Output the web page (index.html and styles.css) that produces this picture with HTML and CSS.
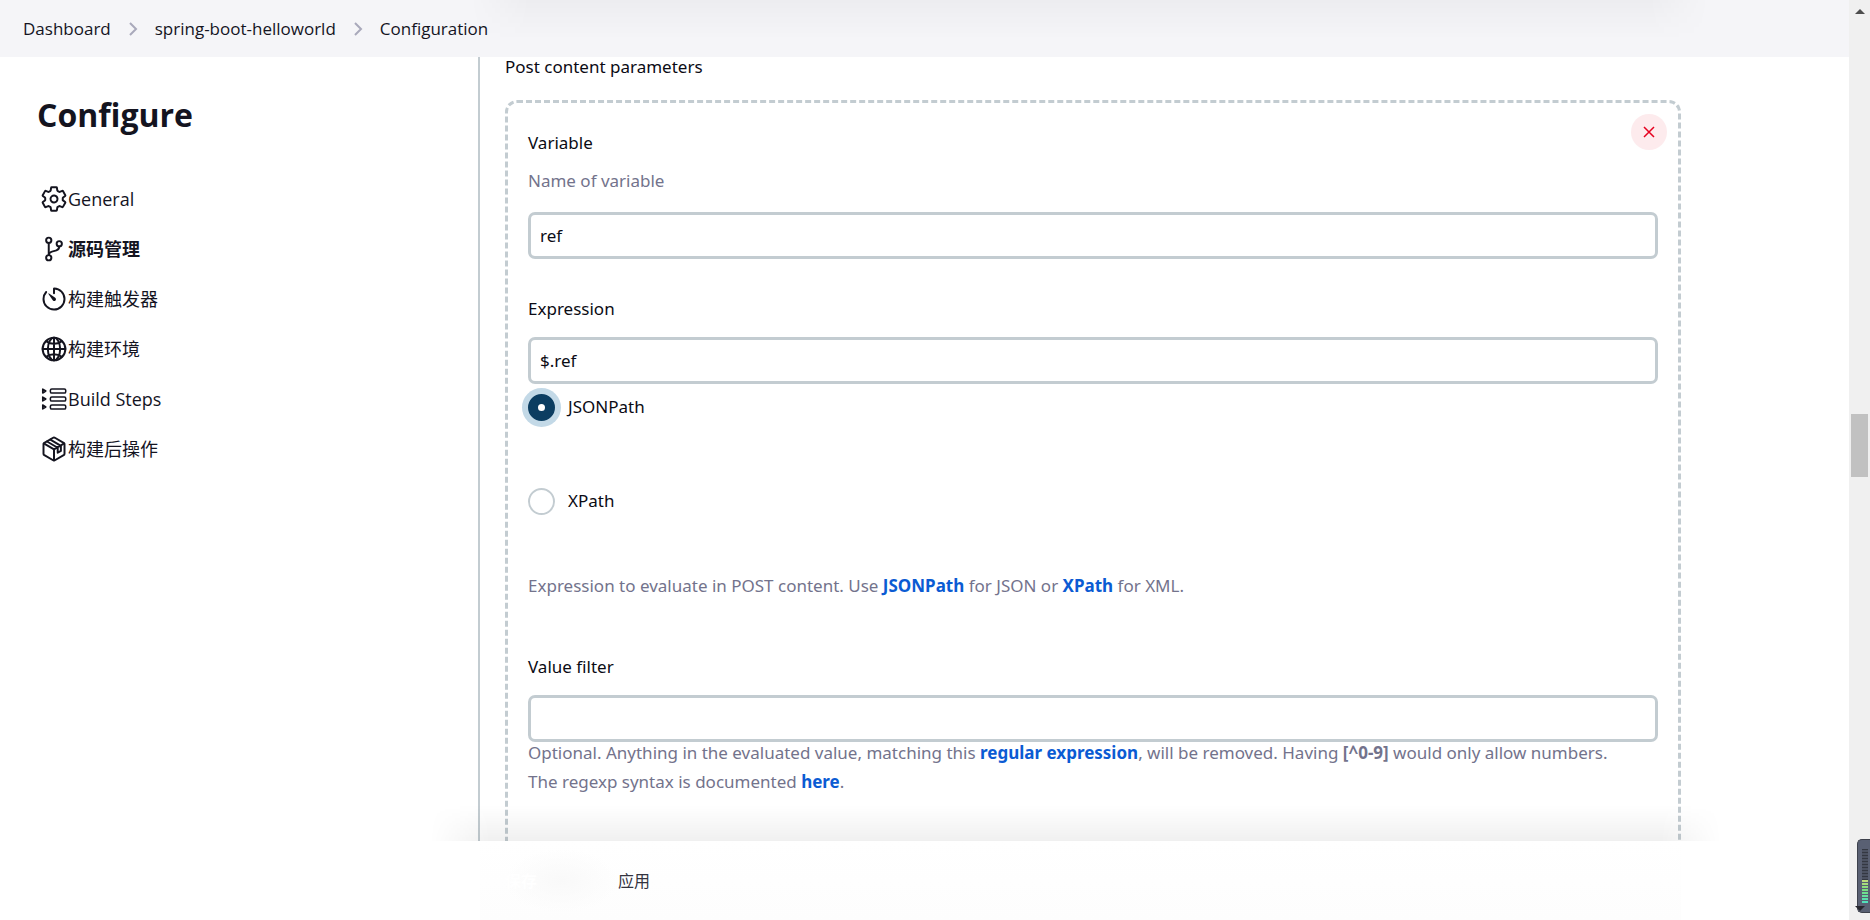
FILE: index.html
```html
<!DOCTYPE html>
<html lang="zh-CN">
<head>
<meta charset="utf-8">
<title>spring-boot-helloworld Config</title>
<link rel="stylesheet" href="styles.css">
</head>
<body>
<div class="app">
  <header class="topbar">
    <nav class="breadcrumbs" aria-label="Breadcrumb">
      <a href="#">Dashboard</a>
      <svg class="chevron" viewBox="0 0 10 14" aria-hidden="true"><path d="M2 1l6 6-6 6"/></svg>
      <a href="#">spring-boot-helloworld</a>
      <svg class="chevron" viewBox="0 0 10 14" aria-hidden="true"><path d="M2 1l6 6-6 6"/></svg>
      <a href="#">Configuration</a>
    </nav>
  </header>

  <div class="workspace">
    <aside class="sidebar">
      <h1 class="title">Configure</h1>
      <nav class="tasks" aria-label="Configure">
        <a class="task" href="#">
          <svg class="icon" viewBox="0 0 512 512" aria-hidden="true"><path d="M262.29 192.31a64 64 0 1057.4 57.4 64.13 64.13 0 00-57.4-57.4zM416.39 256a154.34 154.34 0 01-1.53 20.79l45.21 35.46a10.81 10.81 0 012.45 13.75l-42.77 74a10.81 10.81 0 01-13.14 4.59l-44.9-18.08a16.11 16.11 0 00-15.17 1.75A164.48 164.48 0 01325 400.8a15.94 15.94 0 00-8.82 12.14l-6.73 47.89a11.08 11.08 0 01-10.68 9.17h-85.54a11.11 11.11 0 01-10.69-8.87l-6.72-47.82a16.07 16.07 0 00-9-12.22 155.3 155.3 0 01-21.46-12.57 16 16 0 00-15.11-1.71l-44.89 18.07a10.81 10.81 0 01-13.14-4.58l-42.77-74a10.8 10.8 0 012.45-13.75l38.21-30a16.05 16.05 0 006-14.08c-.36-4.17-.58-8.33-.58-12.5s.21-8.27.58-12.35a16 16 0 00-6.07-13.94l-38.19-30A10.81 10.81 0 0149.48 186l42.77-74a10.81 10.81 0 0113.14-4.59l44.9 18.08a16.11 16.11 0 0015.17-1.75A164.48 164.48 0 01187 111.2a15.94 15.94 0 008.82-12.14l6.73-47.89A11.08 11.08 0 01213.23 42h85.54a11.11 11.11 0 0110.69 8.87l6.72 47.82a16.07 16.07 0 009 12.22 155.3 155.3 0 0121.46 12.57 16 16 0 0015.11 1.71l44.89-18.07a10.81 10.81 0 0113.14 4.58l42.77 74a10.8 10.8 0 01-2.45 13.75l-38.21 30a16.05 16.05 0 00-6.05 14.08c.33 4.14.55 8.3.55 12.47z"/></svg>
          <span>General</span>
        </a>
        <a class="task task-active" href="#">
          <svg class="icon" viewBox="0 0 512 512" aria-hidden="true"><circle cx="160" cy="96" r="48"/><circle cx="160" cy="416" r="48"/><path d="M160 368V144"/><circle cx="352" cy="160" r="48"/><path d="M352 208c0 128-192 48-192 160"/></svg>
          <span>源码管理</span>
        </a>
        <a class="task" href="#">
          <svg class="icon" viewBox="0 0 512 512" aria-hidden="true"><path d="M112.91 128A191.85 191.85 0 0064 254c-1.18 106.35 85.65 193.8 192 194 106.2.2 192-85.83 192-192 0-104.54-83.55-189.61-187.5-192a4.36 4.36 0 00-4.5 4.37V152"/><path class="solid" d="M233.38 278.63l-79-113a8.13 8.13 0 0111.32-11.32l113 79a32.5 32.5 0 01-37.25 53.26 33.21 33.21 0 01-8.07-7.94z"/></svg>
          <span>构建触发器</span>
        </a>
        <a class="task" href="#">
          <svg class="icon" viewBox="0 0 512 512" aria-hidden="true"><path d="M256 48C141.13 48 48 141.13 48 256s93.13 208 208 208 208-93.13 208-208S370.87 48 256 48z"/><path d="M256 48c-58.07 0-112.67 93.13-112.67 208S197.93 464 256 464s112.67-93.13 112.67-208S314.07 48 256 48z"/><path d="M117.33 117.33c38.24 27.15 86.38 43.34 138.67 43.34s100.43-16.19 138.67-43.34M394.67 394.67c-38.24-27.15-86.38-43.34-138.67-43.34s-100.43 16.19-138.67 43.34M256 48v416M464 256H48"/></svg>
          <span>构建环境</span>
        </a>
        <a class="task" href="#">
          <svg class="icon icon-fine" viewBox="0 0 512 512" aria-hidden="true"><rect x="190" y="72" width="280" height="76" rx="26"/><rect x="190" y="218" width="280" height="76" rx="26"/><rect x="190" y="364" width="280" height="76" rx="26"/><path d="M50 74v72l56-36zM50 220v72l56-36zM50 366v72l56-36z"/></svg>
          <span>Build Steps</span>
        </a>
        <a class="task" href="#">
          <svg class="icon" viewBox="0 0 512 512" aria-hidden="true"><path d="M448 341.37V170.61A32 32 0 00432.11 143l-152-88.46a47.94 47.94 0 00-48.24 0L79.89 143A32 32 0 0064 170.61v170.76A32 32 0 0079.89 369l152 88.46a48 48 0 0048.24 0l152-88.46A32 32 0 00448 341.37z"/><path d="M69 153.99l187 110 187-110M256 463.99v-200M128 119l196 114v92l58-34v-92L190 84"/></svg>
          <span>构建后操作</span>
        </a>
      </nav>
    </aside>

    <main class="content">
      <h2 class="section-label">Post content parameters</h2>
      <form class="repeatable">
        <button class="remove" type="button" aria-label="Remove">
          <svg viewBox="0 0 12 12" aria-hidden="true"><path d="M1 1l10 10M11 1L1 11"/></svg>
        </button>

        <div class="field field-variable">
          <label class="label" for="variable">Variable</label>
          <p class="hint">Name of variable</p>
          <input class="textbox" id="variable" type="text" value="ref">
        </div>

        <div class="field field-expression">
          <label class="label" for="expression">Expression</label>
          <input class="textbox" id="expression" type="text" value="$.ref">
          <div class="choices">
            <label class="choice"><input class="radio" type="radio" name="kind" checked><span>JSONPath</span></label>
            <label class="choice"><input class="radio" type="radio" name="kind"><span>XPath</span></label>
          </div>
          <p class="help">Expression to evaluate in POST content. Use <a href="#">JSONPath</a> for JSON or <a href="#">XPath</a> for XML.</p>
        </div>

        <div class="field">
          <label class="label" for="filter">Value filter</label>
          <input class="textbox" id="filter" type="text">
          <p class="help">Optional. Anything in the evaluated value, matching this <a href="#">regular expression</a>, will be removed. Having <b>[^0-9]</b> would only allow numbers.<br>The regexp syntax is documented <a href="#">here</a>.</p>
        </div>
      </form>
    </main>
  </div>

  <footer class="actions">
    <div class="actions-bar">
      <button class="save" type="submit">保存</button>
      <button class="apply" type="button">应用</button>
    </div>
  </footer>
</div>

<div class="scrollbar" aria-hidden="true">
  <span class="arrow-up"></span>
  <span class="thumb"></span>
  <span class="meter"><span class="meter-off"></span><span class="meter-on"></span></span>
  <span class="arrow-down"></span>
</div>
</body>
</html>
```

FILE: styles.css
```css
* {
  box-sizing: border-box;
}

body {
  display: flex;
  height: 100vh;
  margin: 0;
  overflow: hidden;
  background: #fff;
  color: #14141f;
  font-family: "Open Sans", "Noto Sans CJK SC", sans-serif;
  font-size: 17px;
  line-height: 28px;
}

h1,
h2,
p {
  margin: 0;
}

a {
  color: inherit;
  text-decoration: none;
}

.app {
  display: flex;
  flex: 1;
  flex-direction: column;
  min-width: 0;
}

/* Top bar */
.topbar {
  position: relative;
  flex: none;
  height: 57px;
  padding: 0 23px;
  background: #f5f5f8;
}

.topbar::before {
  position: absolute;
  top: 0;
  right: 140px;
  left: 470px;
  height: 40px;
  background: linear-gradient(rgb(0 0 0 / 3%), rgb(0 0 0 / 0%));
  content: "";
  mask-image: linear-gradient(90deg, transparent, #000 60px, #000 calc(100% - 60px), transparent);
}

.breadcrumbs {
  display: flex;
  align-items: center;
  height: 57px;
}

.chevron {
  width: 10px;
  height: 14px;
  margin: 0 17px;
  fill: none;
  stroke: #a9a9bb;
  stroke-width: 2;
}

/* Sidebar */
.workspace {
  display: flex;
  flex: 1;
  min-height: 0;
}

.sidebar {
  flex: none;
  width: 480px;
  padding: 34px 37px;
  border-right: 2px solid #c3ccd1;
}

.title {
  font-size: 32px;
  font-weight: 700;
  line-height: 48px;
}

.tasks {
  display: flex;
  flex-direction: column;
  margin-top: 35px;
}

.task {
  display: flex;
  align-items: center;
  height: 50px;
  padding-left: 3px;
  font-size: 18px;
}

.task-active {
  font-weight: 700;
}

.icon {
  width: 28px;
  height: 28px;
  fill: none;
  stroke: currentColor;
  stroke-linecap: round;
  stroke-linejoin: round;
  stroke-width: 36;
}

.icon-fine {
  stroke-width: 28;
}

.icon .solid {
  fill: currentColor;
  stroke: none;
}

/* Form */
.content {
  flex: 1;
  min-width: 0;
  padding: 0 168px 0 25px;
  color: #0b0b14;
  font-family: "Noto Sans", "Noto Sans CJK SC", sans-serif;
}

.section-label {
  margin-bottom: 23px;
  font-size: 17px;
  font-weight: 400;
  line-height: 20px;
}

.repeatable {
  position: relative;
  min-height: 900px;
  padding: 26px 20px;
  border: 3px dashed #c3ccd1;
  border-radius: 12px;
}

.remove {
  position: absolute;
  top: 11px;
  right: 11px;
  display: flex;
  align-items: center;
  justify-content: center;
  width: 36px;
  height: 36px;
  padding: 0;
  border: 0;
  border-radius: 50%;
  background: #fdebed;
}

.remove svg {
  width: 12px;
  height: 12px;
  fill: none;
  stroke: #e6001f;
  stroke-width: 1.5;
}

.field {
  display: flex;
  flex-direction: column;
}

.field-variable {
  margin-bottom: 36px;
}

.field-expression {
  margin-bottom: 53px;
}

.label {
  margin-bottom: 14px;
}

.field-variable .label {
  margin-bottom: 10px;
}

.hint {
  margin-bottom: 17px;
}

.hint,
.help {
  color: #73738c;
}

.help {
  margin-top: -4px;
  line-height: 29px;
}

.help a {
  color: #0b5bd3;
  font-weight: 700;
}

.textbox {
  width: 100%;
  height: 47px;
  padding: 0 9px;
  border: 3px solid #c3ccd1;
  border-radius: 7px;
  background: #fff;
  color: inherit;
  font: inherit;
}

.choices {
  display: flex;
  flex-direction: column;
  gap: 66px;
  margin: 9px 0 60px;
}

.choice {
  display: flex;
  align-items: center;
  gap: 13px;
}

.radio {
  width: 27px;
  height: 27px;
  margin: 0;
  border: 2px solid #c3ccd1;
  border-radius: 50%;
  appearance: none;
  background: #fff;
}

.radio:checked {
  border: 10px solid #0b3d61;
  box-shadow: 0 0 0 6px #c3d9e7;
}

/* Footer */
.actions {
  position: relative;
  z-index: 1;
  flex: none;
  height: 79px;
  padding: 0 168px 0 480px;
  background: #fff;
}

.actions-bar {
  position: relative;
  display: flex;
  align-items: center;
  height: 79px;
  padding-left: 25px;
  background: linear-gradient(#fff, #fdfdfd);
}

.actions-bar::before {
  position: absolute;
  right: -40px;
  bottom: 100%;
  left: -50px;
  height: 36px;
  background: linear-gradient(rgb(0 0 0 / 0%), rgb(0 0 0 / 6%));
  content: "";
  mask-image: linear-gradient(90deg, transparent, #000 60px, #000 calc(100% - 60px), transparent);
}

.save,
.apply {
  padding: 0;
  border: 0;
  background: none;
  font: inherit;
  font-size: 16px;
}

.save {
  width: 113px;
  height: 64px;
  background: radial-gradient(closest-side, #f9f9f9, transparent);
  color: #fff;
  font-weight: 700;
  text-align: left;
}

.apply {
  color: #33333f;
}

/* Scrollbar */
.scrollbar {
  position: relative;
  flex: none;
  width: 21px;
  background: #f0f0f0;
}

.arrow-up,
.arrow-down {
  position: absolute;
  left: 6px;
  border-right: 5px solid transparent;
  border-left: 5px solid transparent;
}

.arrow-up {
  top: 9px;
  border-bottom: 5px solid #4d4d4d;
}

.arrow-down {
  bottom: 9px;
  border-top: 5px solid #26262e;
}

.thumb {
  position: absolute;
  top: 45%;
  right: 2px;
  left: 2px;
  height: 63px;
  background: #c1c1c1;
}

.meter {
  position: absolute;
  right: 0;
  bottom: 7px;
  display: flex;
  flex-direction: column;
  width: 13px;
  height: 74px;
  padding: 9px 2px 8px 4px;
  border: 1px solid #3d414c;
  border-right: 0;
  border-radius: 5px 0 0 5px;
  background: #596073;
}

.meter-off {
  flex: 32;
  background: repeating-linear-gradient(#343842 0 1px, #4c5261 1px 3px);
}

.meter-on {
  flex: 25;
  background: repeating-linear-gradient(transparent 0 2px, #596073 2px 3px), linear-gradient(#c5dd7a, #7ae07f 40%, #4be0c4);
}
```
